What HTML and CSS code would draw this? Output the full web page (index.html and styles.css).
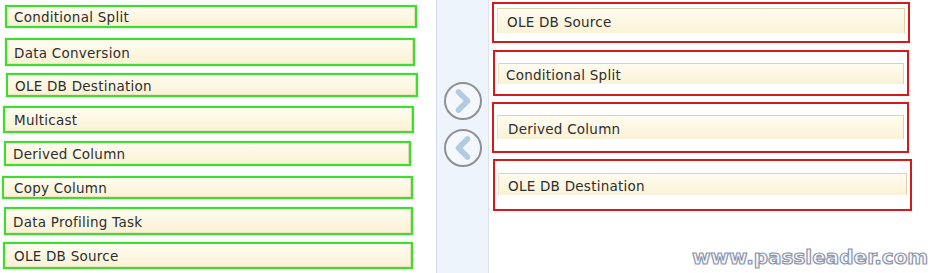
FILE: index.html
```html
<!DOCTYPE html>
<html>
<head>
<meta charset="utf-8">
<link rel="stylesheet" href="styles.css">
</head>
<body>
<div class="page">
  <div class="col-left">
    <div class="gbox g1"><div class="item">Conditional Split</div></div>
    <div class="gbox g2"><div class="item">Data Conversion</div></div>
    <div class="gbox g3"><div class="item">OLE DB Destination</div></div>
    <div class="gbox g4"><div class="item">Multicast</div></div>
    <div class="gbox g5"><div class="item">Derived Column</div></div>
    <div class="gbox g6"><div class="item">Copy Column</div></div>
    <div class="gbox g7"><div class="item">Data Profiling Task</div></div>
    <div class="gbox g8"><div class="item">OLE DB Source</div></div>
  </div>
  <div class="mid">
    <div class="circ c1">
      <svg width="38" height="38" viewBox="0 0 38 38"><polyline points="14.5,10 23.5,19 14.5,28" class="chev"/></svg>
    </div>
    <div class="circ c2">
      <svg width="38" height="38" viewBox="0 0 38 38"><polyline points="23.5,10 14.5,19 23.5,28" class="chev"/></svg>
    </div>
  </div>
  <div class="col-right">
    <div class="rbox r1"><div class="item ritem ri1">OLE DB Source</div></div>
    <div class="rbox r2"><div class="item ritem ri2">Conditional Split</div></div>
    <div class="rbox r3"><div class="item ritem ri3">Derived Column</div></div>
    <div class="rbox r4"><div class="item ritem ri4">OLE DB Destination</div></div>
  </div>
  <div class="wm">www.passleader.com</div>
</div>
</body>
</html>
```
FILE: styles.css
```css
html, body { margin: 0; padding: 0; background: #fff; }
.page {
  position: relative;
  width: 941px;
  height: 273px;
  display: flex;
  overflow: hidden;
  font-family: "DejaVu Sans", Verdana, sans-serif;
  font-size: 13.5px;
  letter-spacing: 0.25px;
  color: #2e2e2e;
}
.col-left {
  width: 436px;
  display: flex;
  flex-direction: column;
  align-items: flex-start;
}
.gbox {
  box-sizing: border-box;
  border: 2px solid #3ce02c;
  box-shadow: 0 0 1.5px #a6ee98;
  display: flex;
}
.item {
  flex: 1;
  display: flex;
  align-items: center;
  padding-left: 7px;
  padding-top: 2px;
  box-sizing: border-box;
  background: linear-gradient(#fffcf0, #fbf2d6);
  border-right: 1px solid #e6dcb8;
  border-bottom: 1px solid #eee4c4;
  white-space: nowrap;
}
.g1 { margin-top: 5px;  height: 23px; margin-left: 5px; width: 412px; }
.g2 { margin-top: 10px; height: 28px; margin-left: 5px; width: 410px; }
.g3 { margin-top: 7px;  height: 24px; margin-left: 6px; width: 412px; }
.g4 { margin-top: 9px;  height: 27px; margin-left: 3px; width: 411px; }
.g5 { margin-top: 8px;  height: 25px; margin-left: 4px; width: 407px; }
.g6 { margin-top: 10px; height: 23px; margin-left: 2px; width: 411px; }
.g7 { margin-top: 8px;  height: 28px; margin-left: 4px; width: 409px; }
.g8 { margin-top: 7px;  height: 27px; margin-left: 3px; width: 410px; }
.g1 .item, .g3 .item, .g5 .item, .g7 .item { padding-left: 7px; }
.g4 .item, .g8 .item { padding-left: 9px; }
.g6 .item { padding-left: 10px; }
.g2 .item { padding-left: 7px; }

.mid {
  box-sizing: border-box;
  width: 53px;
  height: 273px;
  background: #eef4fc;
  border-left: 1px solid #d3dbe7;
  border-right: 1px solid #dbe2ec;
  display: flex;
  flex-direction: column;
  align-items: center;
  padding-top: 82px;
  gap: 9px;
}
.circ {
  width: 38px;
  height: 38px;
  box-sizing: border-box;
  border: 2px solid #8e9194;
  border-radius: 50%;
  background: #f4f7fb;
  display: flex;
  align-items: center;
  justify-content: center;
}
.circ svg { display: block; margin: -2px; }
.chev {
  fill: none;
  stroke: #b0cbe2;
  stroke-width: 5.5;
  stroke-linecap: round;
  stroke-linejoin: round;
}

.col-right {
  display: flex;
  flex-direction: column;
  align-items: flex-start;
}
.rbox {
  box-sizing: border-box;
  border: 2px solid #d41a1a;
  background: #fff;
  padding-left: 3px;
  padding-right: 3px;
}
.ritem {
  display: flex;
  border-top: 1px solid #ddd3ac;
  border-left: 1px solid #ece3c2;
  border-right: 1px solid #ddd3ac;
  border-bottom: none;
  padding-left: 9px;
}
.r1 { margin-top: 2px; margin-left: 3px; width: 418px; height: 41px; padding-top: 4px; }
.r2 { margin-top: 7px; margin-left: 4px; width: 416px; height: 46px; padding-top: 11px; }
.r3 { margin-top: 6px; margin-left: 3px; width: 417px; height: 51px; padding-top: 11px; }
.r4 { margin-top: 6px; margin-left: 4px; width: 419px; height: 52px; padding-top: 12px; }
.ri1 { height: 25px; }
.ri2 { height: 21px; padding-left: 7px; }
.ri3 { height: 24px; padding-left: 10px; }
.ri4 { height: 22px; padding-left: 9px; }

.wm {
  position: absolute;
  left: 692px;
  top: 245px;
  font-family: "DejaVu Sans", sans-serif;
  font-weight: bold;
  font-size: 20px;
  letter-spacing: 0px;
  color: #f4f8ff;
  -webkit-text-stroke: 1.2px #8d95a8;
  white-space: nowrap;
}
```
